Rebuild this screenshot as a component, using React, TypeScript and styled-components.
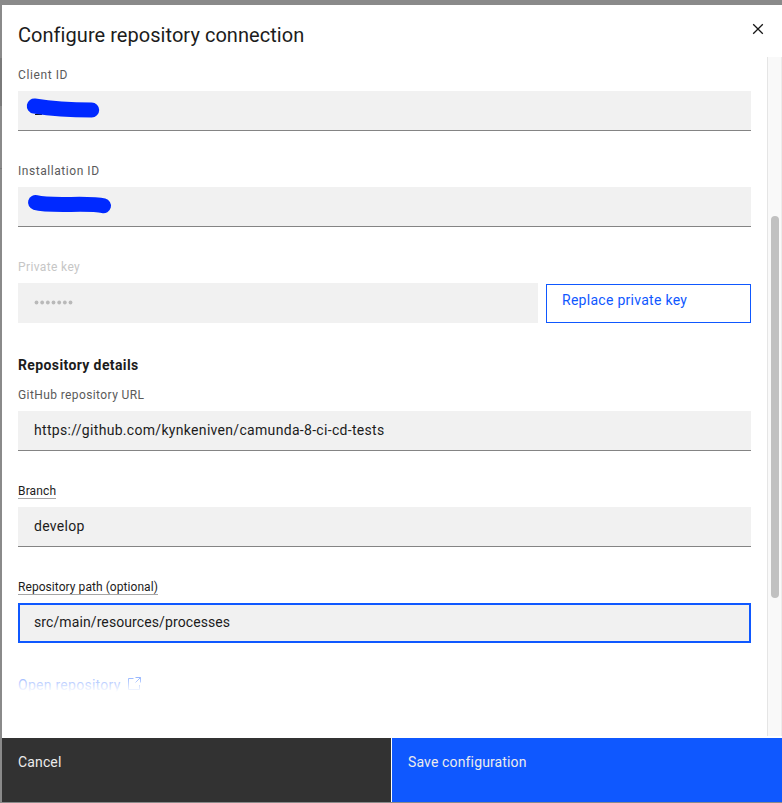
import React from "react";
import styled, { createGlobalStyle } from "styled-components";

const Global = createGlobalStyle`
  * { box-sizing: border-box; }
  html, body { margin: 0; padding: 0; }
  body { font-family: Roboto, "Liberation Sans", sans-serif; color: #1c1c1c; overflow: hidden; }
  button { font: inherit; border-radius: 0; cursor: pointer; }
`;

const Backdrop = styled.div`
  width: 782px;
  height: 803px;
  padding: 5px 0 1px 2px;
  background: linear-gradient(#7a7a7a, #7a7a7a) 0 58px / 2px 48px no-repeat,
    linear-gradient(#787878, #787878) 0 168px / 2px 1px no-repeat, #8a8a8a;
`;

const Modal = styled.section`
  display: flex;
  flex-direction: column;
  height: 797px;
  background: #fff;
`;

const Header = styled.header`
  display: flex;
  justify-content: space-between;
  flex: 0 0 52px;
  padding: 16px 17px 0 16px;
`;

const Title = styled.h1`
  margin: 0;
  font-size: 20px;
  font-weight: 400;
  line-height: 28px;
  white-space: nowrap;
  letter-spacing: 0.05px;
`;

const CloseButton = styled.button`
  display: flex;
  width: 14px;
  height: 16px;
  padding: 0;
  border: 0;
  background: none;
  justify-content: center;
  align-items: center;
`;

const Scroller = styled.div`
  display: flex;
  flex: 0 0 679px;
  overflow: hidden;
`;

const Form = styled.div`
  position: relative;
  flex: 1;
  padding: 10px 16px 0;
`;

const Field = styled.div<{ $gap?: number }>`
  display: flex;
  flex-direction: column;
  align-items: flex-start;
  gap: 8px;
  margin-bottom: ${(p) => p.$gap ?? 32}px;
`;

const Label = styled.label<{ $color?: string; $hint?: boolean; $track: number }>`
  height: 16px;
  font-size: 12px;
  line-height: 16px;
  white-space: nowrap;
  letter-spacing: ${(p) => p.$track}px;
  color: ${(p) => p.$color ?? "#5a5a5a"};
  border-bottom: ${(p) => (p.$hint ? "1px solid #a6a6a6" : "0")};
`;

const Input = styled.div<{ $state?: "focus" | "disabled"; $track?: number }>`
  display: flex;
  align-items: center;
  width: 100%;
  height: 40px;
  padding: 0 16px 2px;
  background: #f1f1f1;
  font-size: 14px;
  line-height: 18px;
  white-space: nowrap;
  letter-spacing: ${(p) => p.$track ?? 0.16}px;
  box-shadow: ${(p) =>
    p.$state === "focus"
      ? "inset 0 0 0 2px #0f58ff"
      : p.$state === "disabled"
        ? "none"
        : "inset 0 -1px 0 #848484"};
`;

const Scribble = styled.svg`
  display: block;
  flex: none;
  margin: 2px 0 0 -16px;
`;

const KeyRow = styled.div`
  display: grid;
  grid-template-columns: 520px 205px;
  gap: 8px;
  align-items: end;
  margin-bottom: 33px;
`;

const Dots = styled.svg`
  display: block;
  margin-top: 2px;
`;

const ReplaceButton = styled.button`
  height: 39px;
  padding: 6px 15px;
  border: 1px solid #0f58ff;
  background: #fff;
  color: #0f58ff;
  font-size: 14px;
  line-height: 18px;
  letter-spacing: 0.28px;
  text-align: left;
  display: flex;
  align-items: flex-start;
  white-space: nowrap;
`;

const SectionTitle = styled.h2`
  margin: 0 0 13px;
  font-size: 14px;
  font-weight: 700;
  line-height: 18px;
  letter-spacing: 0.38px;
`;

const RepoLink = styled.a`
  display: inline-flex;
  align-items: center;
  gap: 6px;
  height: 18px;
  font-size: 14px;
  line-height: 18px;
  letter-spacing: 0.27px;
  white-space: nowrap;
  color: #0f58ff;
`;

const LinkIcon = styled.svg`
  display: block;
  margin-bottom: 2px;
`;

const Fade = styled.div`
  position: absolute;
  left: 0;
  right: 0;
  top: 601px;
  height: 78px;
  background: linear-gradient(rgba(255, 255, 255, 0), #fff 34px);
`;

const Track = styled.div`
  flex: 0 0 15px;
  padding: 159px 2px 0 3px;
  background: #f9f9f9;
  border-left: 1px solid #e5e5e5;
  border-right: 1px solid #ececec;
`;

const Thumb = styled.div`
  width: 8px;
  height: 382px;
  border-radius: 4px;
  background: #c1c1c1;
`;

const Footer = styled.footer`
  display: grid;
  grid-template-columns: 389px 390px;
  gap: 1px;
  margin-top: 2px;
  height: 64px;
`;

const FooterButton = styled.button<{ $primary?: boolean }>`
  display: flex;
  align-items: flex-start;
  padding: 15px 16px;
  border: 0;
  background: ${(p) => (p.$primary ? "#0f58ff" : "#323232")};
  color: #ececec;
  font-size: 14px;
  line-height: 18px;
  letter-spacing: 0.14px;
`;

export default function App() {
  return (
    <Backdrop>
      <Global />
      <Modal>
        <Header>
          <Title>Configure repository connection</Title>
          <CloseButton aria-label="Close">
            <svg width="12" height="12" viewBox="0 0 12 12" fill="none" stroke="#161616" strokeWidth="1.3">
              <path d="M1.2 1.2 10.8 10.8M10.8 1.2 1.2 10.8" />
            </svg>
          </CloseButton>
        </Header>
        <Scroller>
          <Form>
            <Field>
              <Label $track={0.6}>Client ID</Label>
              <Input>
                <Scribble width="110" height="40" viewBox="0 0 110 40" fill="none">
                  <path d="M17 23.5h7" stroke="#161616" />
                  <path d="M16.3 15C35 18 55 19 73.7 19" stroke="#0029ff" strokeWidth="15" strokeLinecap="round" />
                </Scribble>
              </Input>
            </Field>
            <Field>
              <Label $track={0.55}>Installation ID</Label>
              <Input>
                <Scribble width="110" height="40" viewBox="0 0 110 40" fill="none">
                  <path d="M17.5 15.5C33 20 70 15 85.5 18.8" stroke="#0029ff" strokeWidth="15" strokeLinecap="round" />
                </Scribble>
              </Input>
            </Field>
            <KeyRow>
              <Field $gap={0}>
                <Label $color="#c6c6c6" $track={0.38}>Private key</Label>
                <Input $state="disabled">
                  <Dots width="40" height="6" viewBox="0 0 40 6" fill="#b9b9b9">
                    {[0, 1, 2, 3, 4, 5, 6].map((i) => (
                      <circle key={i} cx={2.5 + i * 5.67} cy="2.5" r="1.9" />
                    ))}
                  </Dots>
                </Input>
              </Field>
              <ReplaceButton>Replace private key</ReplaceButton>
            </KeyRow>
            <SectionTitle>Repository details</SectionTitle>
            <Field>
              <Label $track={0.4}>GitHub repository URL</Label>
              <Input $track={0.31}>https://github.com/kynkeniven/camunda-8-ci-cd-tests</Input>
            </Field>
            <Field>
              <Label $hint $color="#1c1c1c" $track={0.15}>Branch</Label>
              <Input $track={0.28}>develop</Input>
            </Field>
            <Field>
              <Label $hint $color="#1c1c1c" $track={0.06}>Repository path (optional)</Label>
              <Input $state="focus" $track={0.1}>src/main/resources/processes</Input>
            </Field>
            <RepoLink>
              Open repository
              <LinkIcon width="14" height="14" viewBox="0 0 14 14" fill="none" stroke="#0f58ff" strokeWidth="1">
                <path d="M6.5 1.5H1.5v11h11V8M8.5.5h5v5M13.5.5l-5 5" />
              </LinkIcon>
            </RepoLink>
            <Fade />
          </Form>
          <Track>
            <Thumb />
          </Track>
        </Scroller>
        <Footer>
          <FooterButton>Cancel</FooterButton>
          <FooterButton $primary>Save configuration</FooterButton>
        </Footer>
      </Modal>
    </Backdrop>
  );
}
